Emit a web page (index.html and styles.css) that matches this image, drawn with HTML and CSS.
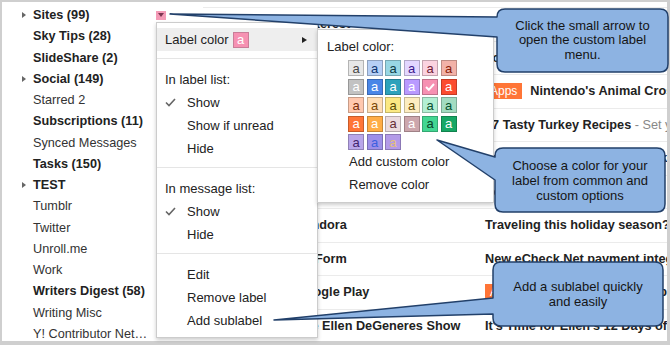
FILE: index.html
```html
<!DOCTYPE html>
<html lang="en">
<head>
  <meta charset="UTF-8">
  <title>Gmail Labels</title>
  <link rel="stylesheet" href="styles.css">
</head>
<body>
<div class="page">
  <div class="frame">
    <aside class="labels">
      <div class="label bold has-kids"><span class="toggle"></span>Sites (99)<span class="menu-btn"></span></div>
      <div class="label bold"><span class="toggle"></span>Sky Tips (28)</div>
      <div class="label bold"><span class="toggle"></span>SlideShare (2)</div>
      <div class="label bold has-kids"><span class="toggle"></span>Social (149)</div>
      <div class="label"><span class="toggle"></span>Starred 2</div>
      <div class="label bold"><span class="toggle"></span>Subscriptions (11)</div>
      <div class="label"><span class="toggle"></span>Synced Messages</div>
      <div class="label bold"><span class="toggle"></span>Tasks (150)</div>
      <div class="label bold has-kids"><span class="toggle"></span>TEST</div>
      <div class="label"><span class="toggle"></span>Tumblr</div>
      <div class="label"><span class="toggle"></span>Twitter</div>
      <div class="label"><span class="toggle"></span>Unroll.me</div>
      <div class="label"><span class="toggle"></span>Work</div>
      <div class="label bold"><span class="toggle"></span>Writers Digest (58)</div>
      <div class="label"><span class="toggle"></span>Writing Misc</div>
      <div class="label"><span class="toggle"></span>Y! Contributor Net…</div>
    </aside>

    <section class="mail">
      <div class="row"><span class="from">Pinterest</span><span class="subject">Popular pins for you this week</span></div>
      <div class="row"><span class="from">Feedly</span><span class="subject">Your daily digest</span></div>
      <div class="row"><span class="from">Nintendo</span><span class="subject"><span class="tag">Apps</span>Nintendo's Animal Crossing: Happy Home Designer</span></div>
      <div class="row"><span class="from">Allrecipes</span><span class="subject">27 Tasty Turkey Recipes<span class="snippet"> - Set your table</span></span></div>
      <div class="row"><span class="from">Medium</span><span class="subject">Top stories from your network this time</span></div>
      <div class="row"><span class="from">LinkedIn</span><span class="subject">People you may know</span></div>
      <div class="row"><span class="from">Pandora</span><span class="subject">Traveling this holiday season? Take Pandora</span></div>
      <div class="row"><span class="from">JotForm</span><span class="subject">New eCheck.Net payment integration</span></div>
      <div class="row"><span class="from">Google Play</span><span class="subject"><span class="tag">Apps</span>Apps to help you shop for holiday gifts now</span></div>
      <div class="row"><span class="from">The Ellen DeGeneres Show</span><span class="subject">It's Time for Ellen's 12 Days of Giveaways</span></div>
    </section>
  </div>

  <div class="menu">
    <div class="menu-item active">Label color<span class="chip">a</span><span class="more"></span></div>
    <div class="menu-sep"></div>
    <div class="menu-item">In label list:</div>
    <div class="menu-item"><span class="check-slot"><svg width="11" height="9" viewBox="0 0 11 9"><polyline points="1,4.5 4,7.5 10,1" fill="none" stroke="#666" stroke-width="1.6"/></svg></span>Show</div>
    <div class="menu-item"><span class="check-slot"></span>Show if unread</div>
    <div class="menu-item"><span class="check-slot"></span>Hide</div>
    <div class="menu-sep"></div>
    <div class="menu-item">In message list:</div>
    <div class="menu-item"><span class="check-slot"><svg width="11" height="9" viewBox="0 0 11 9"><polyline points="1,4.5 4,7.5 10,1" fill="none" stroke="#666" stroke-width="1.6"/></svg></span>Show</div>
    <div class="menu-item"><span class="check-slot"></span>Hide</div>
    <div class="menu-sep"></div>
    <div class="menu-item"><span class="check-slot"></span>Edit</div>
    <div class="menu-item"><span class="check-slot"></span>Remove label</div>
    <div class="menu-item"><span class="check-slot"></span>Add sublabel</div>
  </div>

  <div class="submenu">
    <div class="sub-title">Label color:</div>
    <div class="swatches">
      <span class="sw s1">a</span><span class="sw s2">a</span><span class="sw s3">a</span><span class="sw s4">a</span><span class="sw s5">a</span><span class="sw s6">a</span>
      <span class="sw s7">a</span><span class="sw s8">a</span><span class="sw s9">a</span><span class="sw s10">a</span><span class="sw s11"><svg width="10" height="8" viewBox="0 0 10 8"><polyline points="1,4 3.8,6.8 9,1" fill="none" stroke="#fff" stroke-width="2"/></svg></span><span class="sw s12">a</span>
      <span class="sw s13">a</span><span class="sw s14">a</span><span class="sw s15">a</span><span class="sw s16">a</span><span class="sw s17">a</span><span class="sw s18">a</span>
      <span class="sw s19">a</span><span class="sw s20">a</span><span class="sw s21">a</span><span class="sw s22">a</span><span class="sw s23">a</span><span class="sw s24">a</span>
      <span class="sw s25">a</span><span class="sw s26">a</span><span class="sw s27">a</span>
    </div>
    <div class="sub-item">Add custom color</div>
    <div class="sub-item">Remove color</div>
  </div>

  <svg class="callouts" width="670" height="345" viewBox="0 0 670 345">
    <path d="M505 9H660Q668 9 668 17V64Q668 72 660 72H505Q497 72 497 64V37L170 14L497 17Q497 9 505 9Z"/>
    <path d="M503 148H657Q665 148 665 156V204Q665 212 657 212H503Q495 212 495 204V180L437 140L495 157V156Q495 148 503 148Z"/>
    <path d="M501 262H655Q663 262 663 270V318Q663 326 655 326H501Q493 326 493 318V314L274 320L493 298V270Q493 262 501 262Z"/>
  </svg>
  <div class="callout-text c1">Click the small arrow to<br>open the custom label<br>menu.</div>
  <div class="callout-text c2">Choose a color for your<br>label from common and<br>custom options</div>
  <div class="callout-text c3">Add a sublabel quickly<br>and easily</div>
</div>
</body>
</html>
```

FILE: styles.css
```css
body { margin: 0; font-family: "Liberation Sans", Arial, sans-serif; background: #fff; }
.page { position: relative; width: 670px; height: 345px; overflow: hidden; background: #fff; }
.frame { display: flex; height: 100%; box-sizing: border-box; border: solid #cfcfcf; border-width: 2px 3px 4px 2px; }

/* label list */
.labels { width: 166px; flex: none; box-sizing: border-box; padding: 2.5px 2px 0 0; font-size: 12.7px; color: #333; }
.label { display: flex; align-items: center; height: 21.25px; padding-left: 20px; white-space: nowrap; }
.label.bold { font-weight: bold; color: #222; }
.toggle { width: 11px; flex: none; }
.has-kids .toggle::before { content: ""; display: block; width: 0; height: 0; border-left: 4px solid #666; border-top: 3.5px solid transparent; border-bottom: 3.5px solid transparent; }
.menu-btn { margin-left: auto; width: 10px; height: 9px; background: #f49ab6; display: flex; align-items: center; justify-content: center; }
.menu-btn::before { content: ""; width: 0; height: 0; border-top: 4px solid #7b3550; border-left: 3px solid transparent; border-right: 3px solid transparent; }

/* message list */
.mail { flex: 1; margin-left: 35px; padding-top: 5px; font-size: 12.7px; color: #222; overflow: hidden; }
.row { display: flex; align-items: center; height: 33.5px; box-sizing: border-box; padding-left: 93px; border-top: 1px solid #ebebeb; white-space: nowrap; font-weight: bold; }
.from { width: 189px; flex: none; overflow: hidden; }
.subject { display: flex; align-items: center; }
.snippet { font-weight: normal; color: #888; white-space: pre; }
.tag { background: #ff7537; color: #fff; font-weight: normal; font-size: 12px; padding: 1px 5px; margin-right: 8px; }

/* label menu */
.menu { position: absolute; left: 156px; top: 22px; width: 162px; box-sizing: border-box; padding: 5px 0; background: #fff; border: 1px solid rgba(0,0,0,.2); box-shadow: 0 2px 4px rgba(0,0,0,.2); font-size: 13px; color: #222; }
.menu-item { display: flex; align-items: center; height: 23px; padding: 0 10px 0 8px; white-space: nowrap; }
.menu-item.active { background: #eee; }
.check-slot { width: 22px; flex: none; display: flex; align-items: center; }
.menu-sep { border-top: 1px solid #e5e5e5; margin: 7px 0 9px; }
.chip { width: 16px; height: 16px; box-sizing: border-box; margin-left: 4px; background: #f691b2; border: 1px solid #c97d98; color: #fff; font-size: 13px; line-height: 13px; text-align: center; }
.more { margin-left: auto; width: 0; height: 0; border-left: 5px solid #222; border-top: 3.5px solid transparent; border-bottom: 3.5px solid transparent; }

/* color submenu */
.submenu { position: absolute; left: 317px; top: 29px; width: 177px; height: 174px; box-sizing: border-box; padding: 8px 0 6px 9px; background: #fff; border: 1px solid rgba(0,0,0,.2); box-shadow: 0 2px 4px rgba(0,0,0,.2); font-size: 13px; color: #222; }
.sub-title { line-height: 18px; }
.swatches { display: grid; grid-template-columns: repeat(6, 16px); grid-auto-rows: 16px; gap: 2.5px; margin: 4px 0 0 21px; }
.sw { box-sizing: border-box; border: 1px solid rgba(0,0,0,.22); font-size: 13px; line-height: 13px; text-align: center; display: flex; align-items: center; justify-content: center; }
.sub-item { height: 23px; line-height: 23px; margin-left: 22px; }

.s1 { background: #e7e7e7; color: #464646; }
.s2 { background: #b6cff5; color: #0d3472; }
.s3 { background: #98d7e4; color: #0d3b44; }
.s4 { background: #e3d7ff; color: #3d188e; }
.s5 { background: #fbd3e0; color: #711a36; }
.s6 { background: #f2b2a8; color: #8a1c0a; }
.s7 { background: #c2c2c2; color: #fff; }
.s8 { background: #4986e7; color: #fff; }
.s9 { background: #2da2bb; color: #fff; }
.s10 { background: #b99aff; color: #fff; }
.s11 { background: #f691b2; color: #fff; }
.s12 { background: #fb4c2f; color: #fff; }
.s13 { background: #ffc8af; color: #7a2e0b; }
.s14 { background: #ffdeb5; color: #7a4706; }
.s15 { background: #fbe983; color: #594c05; }
.s16 { background: #fdedc1; color: #684e07; }
.s17 { background: #b3efd3; color: #0b4f30; }
.s18 { background: #a2dcc1; color: #04502e; }
.s19 { background: #ff7537; color: #fff; }
.s20 { background: #ffad46; color: #fff; }
.s21 { background: #ebdbde; color: #662e37; }
.s22 { background: #cca6ac; color: #fff; }
.s23 { background: #42d692; color: #094228; }
.s24 { background: #16a765; color: #fff; }
.s25 { background: #b9a6ea; color: #41236d; }
.s26 { background: #9d8fe8; color: #3c5fe0; }
.s27 { background: #b39ae8; color: #e5c07b; }

/* callouts */
.callouts { position: absolute; left: 0; top: 0; pointer-events: none; }
.callouts path { fill: #8db3e2; stroke: #22406a; stroke-width: 1.5; stroke-linejoin: round; }
.callout-text { position: absolute; display: flex; align-items: center; justify-content: center; text-align: center; font-size: 13px; line-height: 15px; color: #151515; }
.c1 { left: 497px; top: 9px; width: 171px; height: 63px; line-height: 14.5px; }
.c2 { left: 495px; top: 148px; width: 170px; height: 64px; }
.c3 { left: 493px; top: 262px; width: 170px; height: 64px; }
```
